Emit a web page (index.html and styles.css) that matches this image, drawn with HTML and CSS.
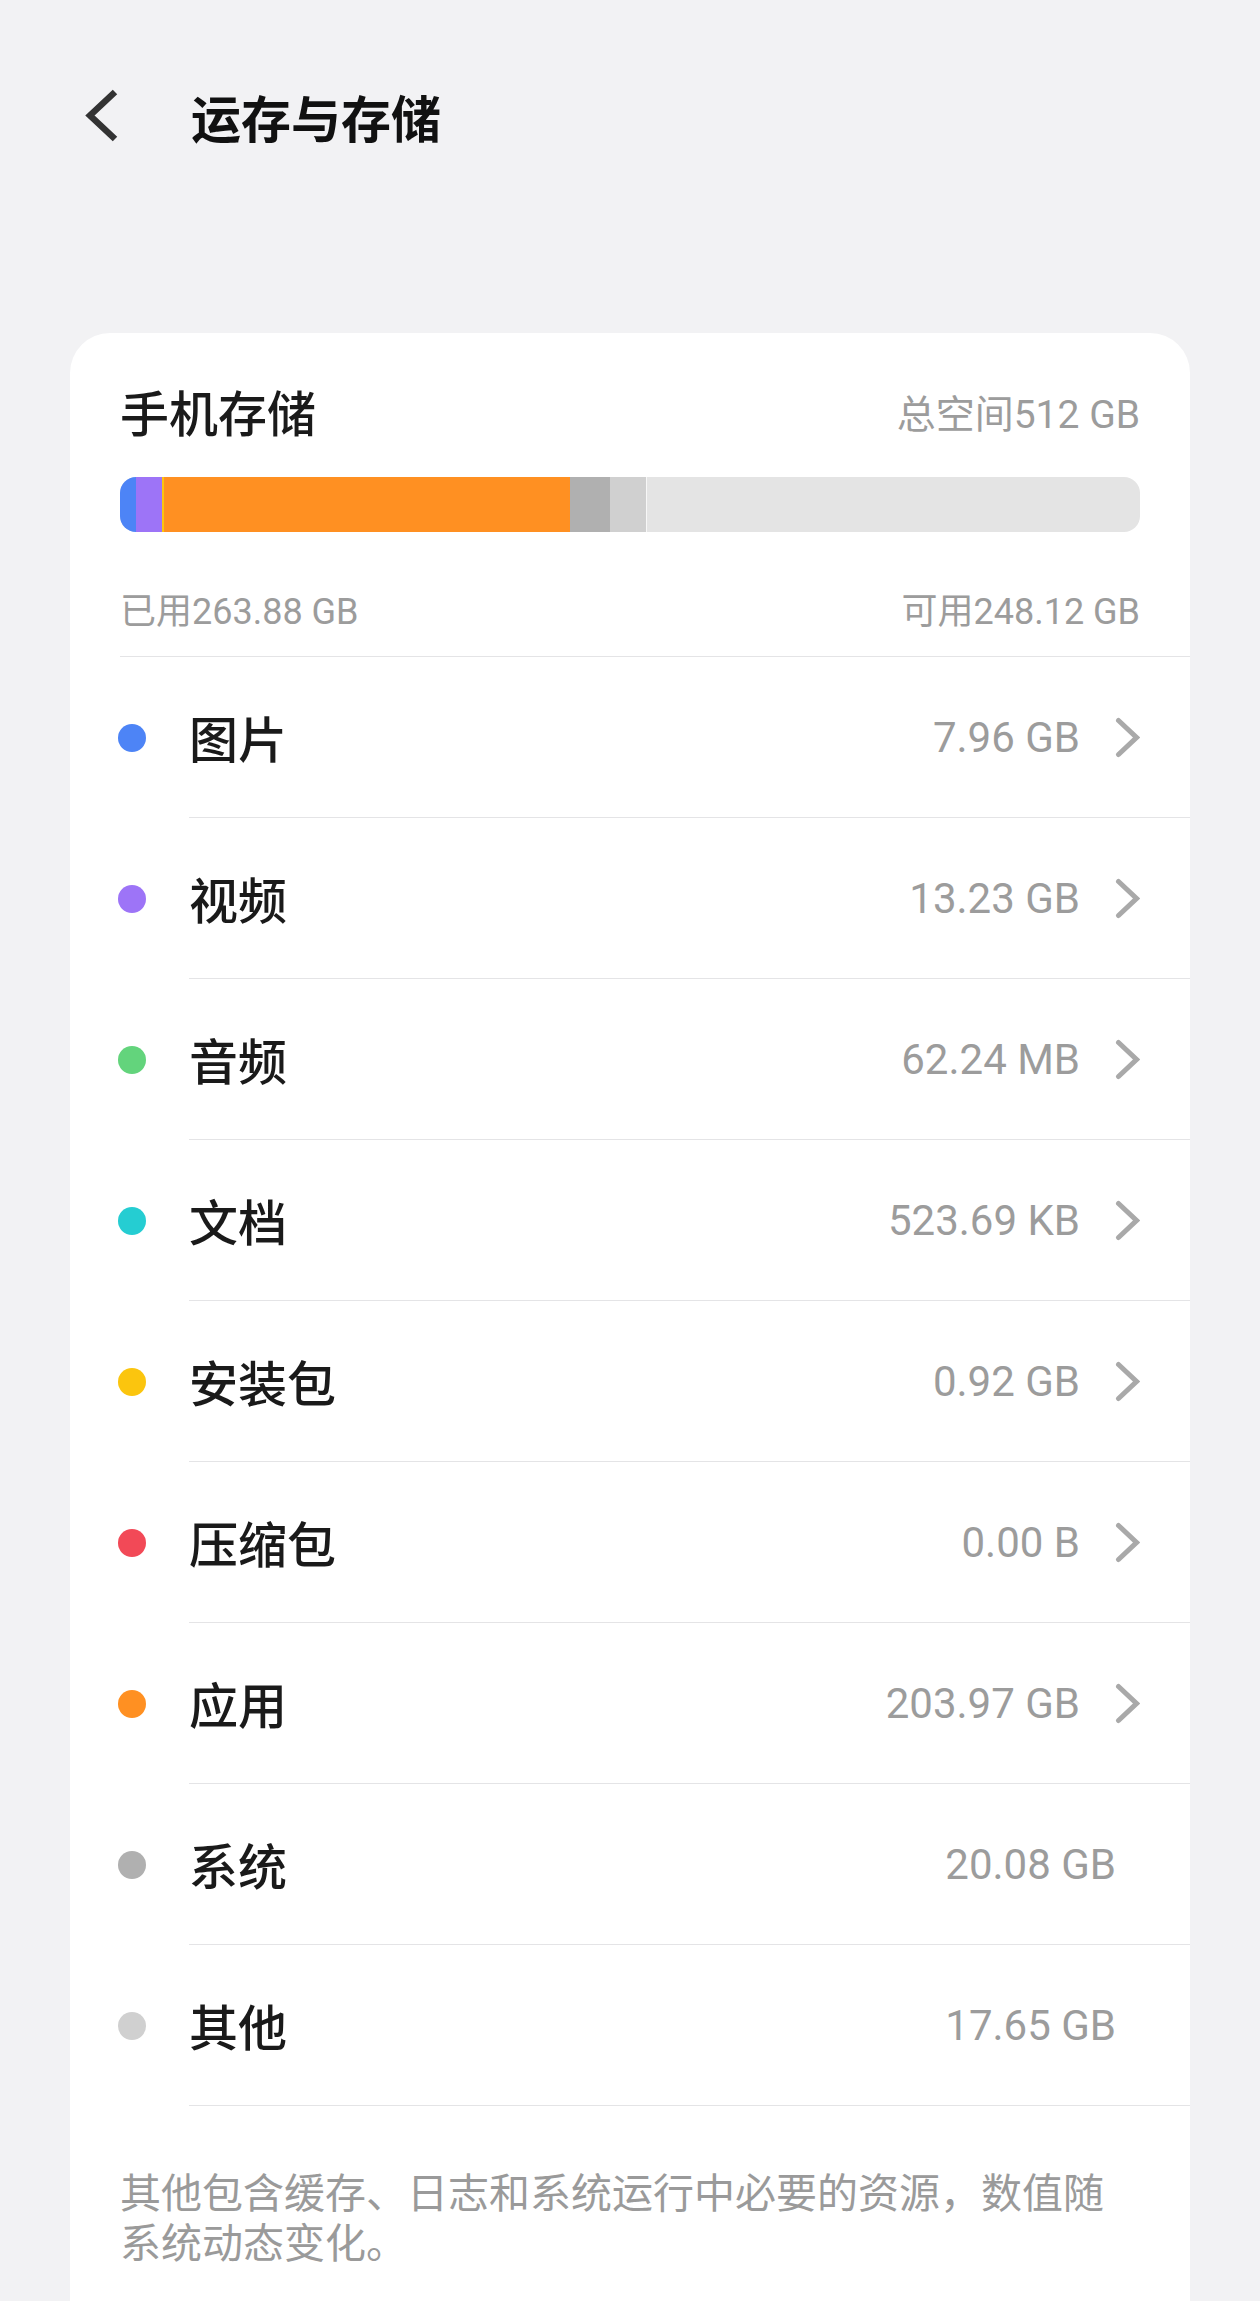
FILE: index.html
```html
<!DOCTYPE html>
<html lang="zh-CN">
<head>
<meta charset="utf-8">
<title>运存与存储</title>
<link rel="stylesheet" href="styles.css">
</head>
<body>
<header class="topbar">
  <svg class="back" viewBox="0 0 40 60" width="40" height="60" aria-hidden="true"><polyline points="32,6 7,29.5 32,53"/></svg>
  <h1 class="title">运存与存储</h1>
</header>
<main class="card">
  <section class="summary">
    <div class="summary-head">
      <h2 class="summary-title">手机存储</h2>
      <span class="total">总空间512 GB</span>
    </div>
    <div class="bar">
      <span class="seg c-blue" style="width:1.555%"></span>
      <span class="seg c-purple" style="width:2.584%"></span>
      <span class="seg c-green" style="width:0.012%"></span>
      <span class="seg c-yellow" style="width:0.18%"></span>
      <span class="seg c-orange" style="width:39.838%"></span>
      <span class="seg c-gray" style="width:3.922%"></span>
      <span class="seg c-light" style="width:3.447%"></span>
    </div>
    <div class="summary-foot">
      <span>已用263.88 GB</span>
      <span>可用248.12 GB</span>
    </div>
  </section>
  <ul class="list">
    <li class="item"><span class="dot c-blue"></span><div class="item-body"><span class="label">图片</span><span class="value">7.96 GB</span><svg class="chev" viewBox="0 0 25 41" width="25" height="41" aria-hidden="true"><polyline points="3.5,3.5 21.5,20.5 3.5,37.5"/></svg></div></li>
    <li class="item"><span class="dot c-purple"></span><div class="item-body"><span class="label">视频</span><span class="value">13.23 GB</span><svg class="chev" viewBox="0 0 25 41" width="25" height="41" aria-hidden="true"><polyline points="3.5,3.5 21.5,20.5 3.5,37.5"/></svg></div></li>
    <li class="item"><span class="dot c-green"></span><div class="item-body"><span class="label">音频</span><span class="value">62.24 MB</span><svg class="chev" viewBox="0 0 25 41" width="25" height="41" aria-hidden="true"><polyline points="3.5,3.5 21.5,20.5 3.5,37.5"/></svg></div></li>
    <li class="item"><span class="dot c-cyan"></span><div class="item-body"><span class="label">文档</span><span class="value">523.69 KB</span><svg class="chev" viewBox="0 0 25 41" width="25" height="41" aria-hidden="true"><polyline points="3.5,3.5 21.5,20.5 3.5,37.5"/></svg></div></li>
    <li class="item"><span class="dot c-yellow"></span><div class="item-body"><span class="label">安装包</span><span class="value">0.92 GB</span><svg class="chev" viewBox="0 0 25 41" width="25" height="41" aria-hidden="true"><polyline points="3.5,3.5 21.5,20.5 3.5,37.5"/></svg></div></li>
    <li class="item"><span class="dot c-red"></span><div class="item-body"><span class="label">压缩包</span><span class="value">0.00 B</span><svg class="chev" viewBox="0 0 25 41" width="25" height="41" aria-hidden="true"><polyline points="3.5,3.5 21.5,20.5 3.5,37.5"/></svg></div></li>
    <li class="item"><span class="dot c-orange"></span><div class="item-body"><span class="label">应用</span><span class="value">203.97 GB</span><svg class="chev" viewBox="0 0 25 41" width="25" height="41" aria-hidden="true"><polyline points="3.5,3.5 21.5,20.5 3.5,37.5"/></svg></div></li>
    <li class="item"><span class="dot c-gray"></span><div class="item-body plain"><span class="label">系统</span><span class="value">20.08 GB</span></div></li>
    <li class="item"><span class="dot c-light"></span><div class="item-body plain"><span class="label">其他</span><span class="value">17.65 GB</span></div></li>
  </ul>
  <p class="note">其他包含缓存、日志和系统运行中必要的资源，数值随系统动态变化。</p>
</main>
</body>
</html>
```

FILE: styles.css
```css
* {
  box-sizing: border-box;
}

html, body {
  margin: 0;
  padding: 0;
}

body {
  background: #f2f2f4;
  font-family: "Noto Sans CJK SC", "Noto Sans", sans-serif;
  color: #1a1a1a;
}

.topbar {
  display: flex;
  align-items: center;
  height: 100px;
  margin-top: 66px;
  padding-left: 83px;
}

.back {
  width: 40px;
  height: 60px;
  flex: none;
}

.back polyline {
  fill: none;
  stroke: #333333;
  stroke-width: 6.5;
  stroke-linejoin: miter;
  stroke-linecap: butt;
}

.title {
  margin: 0 0 0 68px;
  font-size: 50px;
  line-height: 60px;
  font-weight: 700;
  color: #111111;
}

.card {
  margin: 167px 70px 0;
  background: #ffffff;
  border-radius: 40px 40px 0 0;
  padding-left: 50px;
}

.summary {
  padding: 48px 50px 19px 0;
  border-bottom: 1px solid #e4e4e6;
}

.summary-head {
  display: flex;
  align-items: center;
  justify-content: space-between;
  height: 60px;
}

.summary-title {
  margin: 0;
  font-size: 49px;
  line-height: 60px;
  font-weight: 500;
  color: #1a1a1a;
}

.total {
  font-family: Roboto, "Noto Sans CJK SC", sans-serif;
  font-size: 39px;
  color: #9c9c9c;
}

.bar {
  display: flex;
  height: 55px;
  margin-top: 36px;
  background: #e4e4e4;
  border-radius: 16px;
  overflow: hidden;
}

.seg {
  display: block;
  height: 100%;
  flex: none;
  box-shadow: 1px 0 0 rgba(255, 255, 255, 0.7);
}

.summary-foot {
  display: flex;
  justify-content: space-between;
  margin-top: 55px;
  font-family: Roboto, "Noto Sans CJK SC", sans-serif;
  font-size: 36px;
  line-height: 50px;
  color: #9c9c9c;
}

.list {
  list-style: none;
  margin: 0;
  padding: 0;
}

.item {
  display: flex;
  align-items: center;
}

.dot {
  width: 28px;
  height: 28px;
  border-radius: 50%;
  flex: none;
  margin-left: -2px;
}

.item-body {
  flex: 1;
  display: flex;
  align-items: center;
  height: 161px;
  margin-left: 43px;
  padding-right: 50px;
  border-bottom: 1px solid #e4e4e6;
}

.item-body.plain {
  padding-right: 74px;
}

.label {
  flex: 1;
  font-size: 49px;
  line-height: 60px;
  font-weight: 500;
  color: #1a1a1a;
}

.value {
  font-family: Roboto, "Noto Sans", sans-serif;
  font-size: 42px;
  color: #9c9c9c;
}

.chev {
  width: 25px;
  height: 41px;
  flex: none;
  margin-left: 35px;
}

.chev polyline {
  fill: none;
  stroke: #a9a9a9;
  stroke-width: 5;
  stroke-linecap: round;
  stroke-linejoin: miter;
}

.note {
  margin: 0;
  padding: 59px 50px 36px 0;
  font-size: 41px;
  line-height: 50px;
  color: #9a9a9a;
}

.c-blue { background: #4d84f6; }
.c-purple { background: #9d74f7; }
.c-green { background: #63d47c; }
.c-cyan { background: #25cdd2; }
.c-yellow { background: #fbc50e; }
.c-red { background: #f24957; }
.c-orange { background: #ff9022; }
.c-gray { background: #b0b0b0; }
.c-light { background: #d0d0d0; }
```
